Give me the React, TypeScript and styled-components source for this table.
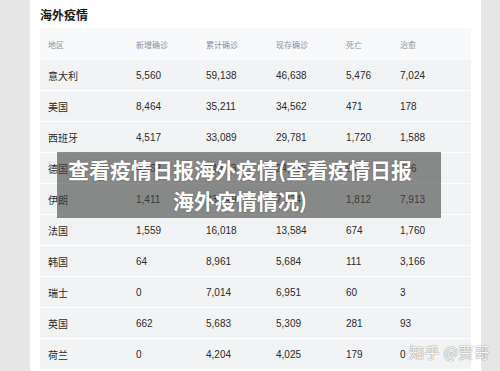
import styled, { createGlobalStyle } from 'styled-components'

const GlobalStyle = createGlobalStyle`
  html, body {
    margin: 0;
    padding: 0;
    background: #e6e6e6;
  }
  body {
    font-family: "Liberation Sans", "Noto Sans CJK SC", sans-serif;
  }
`

const Page = styled.div`
  position: relative;
  display: flex;
  width: 500px;
  height: 371px;
  overflow: hidden;
  background: #e6e6e6;
`

const Panel = styled.div`
  margin-left: 30px;
  width: 451px;
  background: #ffffff;
  padding: 0 10px;
  box-sizing: border-box;
`

const Title = styled.h2`
  margin: 0;
  height: 28px;
  line-height: 30px;
  font-size: 12px;
  font-weight: 700;
  color: #1a1a1a;
  font-family: "Noto Sans CJK SC", sans-serif;
`

const Table = styled.div`
  display: flex;
  flex-direction: column;
  gap: 1px;
`

const Row = styled.div<{ $head?: boolean }>`
  display: grid;
  grid-template-columns: 88px 70px 70px 70px 54px 1fr;
  align-items: center;
  height: ${p => (p.$head ? '32px' : '30px')};
  margin-bottom: ${p => (p.$head ? '-1px' : '0')};
  background: ${p => (p.$head ? '#f8f9fa' : '#f2f3f5')};
`

const Cell = styled.div<{ $head?: boolean }>`
  padding-left: 8px;
  font-size: ${p => (p.$head ? '8px' : '10px')};
  color: ${p => (p.$head ? '#8590a6' : '#2b2b2b')};
  font-family: "Liberation Sans", "Noto Sans CJK SC", sans-serif;
  white-space: nowrap;
`

const Banner = styled.div`
  position: absolute;
  left: 57px;
  top: 152px;
  width: 384px;
  height: 66px;
  background: rgba(70, 70, 70, 0.62);
  display: flex;
  align-items: center;
  justify-content: center;
  text-align: center;
  color: #ffffff;
  font-family: "Noto Sans CJK SC", sans-serif;
  font-weight: 700;
  font-size: 21px;
  line-height: 31px;
  padding: 0 18px 0 0;
  box-sizing: border-box;
  text-shadow: 0 0 2px rgba(0, 0, 0, 0.3);
`

const Watermark = styled.div`
  position: absolute;
  left: 409px;
  top: 341px;
  font-family: "Noto Sans CJK SC", sans-serif;
  font-size: 15px;
  color: rgba(255, 255, 255, 0.95);
  text-shadow: 0 0 1px rgba(0, 0, 0, 0.45), 0 0 2px rgba(0, 0, 0, 0.25);
  letter-spacing: 0.5px;
`

const headers = ['地区', '新增确诊', '累计确诊', '现存确诊', '死亡', '治愈']

const rows = [
  ['意大利', '5,560', '59,138', '46,638', '5,476', '7,024'],
  ['美国', '8,464', '35,211', '34,562', '471', '178'],
  ['西班牙', '4,517', '33,089', '29,781', '1,720', '1,588'],
  ['德国', '4,862', '24,873', '24,736', '94', '266'],
  ['伊朗', '1,411', '23,049', '7,324', '1,812', '7,913'],
  ['法国', '1,559', '16,018', '13,584', '674', '1,760'],
  ['韩国', '64', '8,961', '5,684', '111', '3,166'],
  ['瑞士', '0', '7,014', '6,951', '60', '3'],
  ['英国', '662', '5,683', '5,309', '281', '93'],
  ['荷兰', '0', '4,204', '4,025', '179', '0'],
]

function App() {
  return (
    <Page>
      <GlobalStyle />
      <Panel>
        <Title>海外疫情</Title>
        <Table>
          <Row $head>
            {headers.map(h => (
              <Cell $head key={h}>{h}</Cell>
            ))}
          </Row>
          {rows.map(r => (
            <Row key={r[0]}>
              {r.map((v, i) => (
                <Cell key={i}>{v}</Cell>
              ))}
            </Row>
          ))}
        </Table>
      </Panel>
      <Banner>
        查看疫情日报海外疫情(查看疫情日报
        <br />
        海外疫情情况)
      </Banner>
      <Watermark>知乎 @贾哥</Watermark>
    </Page>
  )
}

export default App
